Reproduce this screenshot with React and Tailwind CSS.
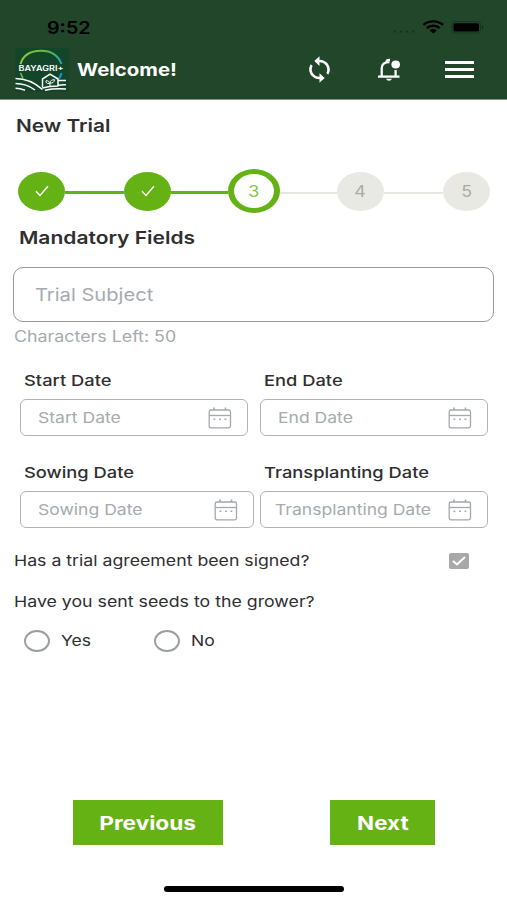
function Text({ className = "", children }) {
  return (
    <span className={`inline-block whitespace-nowrap leading-5 ${className}`}>
      {children}
    </span>
  );
}

function Logo() {
  return (
    <svg width="54" height="44" viewBox="0 0 54 44" fill="none">
      <defs>
        <linearGradient id="ring" x1="6" y1="20" x2="48" y2="22" gradientUnits="userSpaceOnUse">
          <stop offset="0" stopColor="#8fc83a" />
          <stop offset="0.6" stopColor="#63b544" />
          <stop offset="1" stopColor="#1fa3c4" />
        </linearGradient>
      </defs>
      <rect width="54" height="44" fill="#134629" />
      <path d="M5.500 16C8 7.500 15.500 2.700 26 2.700S43.500 8 46.500 16" stroke="url(#ring)" strokeWidth="2" />
      <path d="M5.500 25C6.500 27.500 7 28.500 8 30" stroke="#7cc142" strokeWidth="1.500" />
      <path d="M46.500 25C46 27.500 45.500 28.500 44 30.500" stroke="#1b8fd0" strokeWidth="2.200" />
      <text
        x="3.500"
        y="23"
        fill="#fff"
        fontFamily="Inter, sans-serif"
        fontSize="7"
        fontWeight="600"
        textLength="45"
        lengthAdjust="spacingAndGlyphs"
      >
        BAYAGRI+
      </text>
      <g stroke="#fff" strokeWidth="1.500">
        <path d="M0.500 30.500C10 30.500 19 34 27.500 41.500" />
        <path d="M0.500 35.500C8 35.500 14 37.500 20 42" />
        <path d="M0.500 40.200C4 40.200 7 41 10 42.300" />
        <path d="M43 37.200C46 36.700 48 36.700 51 36.800" />
        <path d="M30 42.200C37 40.700 43 40.500 51 41" />
        <path d="M43 32.500H51" />
        <path d="M27.500 39.500V31L35 26.200L43 31V38C37 38 32 38.600 27.500 40" strokeLinejoin="round" />
        <path d="M35 38V35M34.500 35.500C31.500 36 30.500 34 31 32.800C33 32.400 34.500 33.500 34.500 35.500ZM35 35C35 32.500 37 31.700 39.500 31.700C39.500 34 37.500 35.500 35 35Z" strokeWidth="1" />
      </g>
    </svg>
  );
}

function StatusIcons() {
  return (
    <svg width="94" height="20" viewBox="0 0 94 20" fill="none">
      <g fill="#17301f">
        <ellipse cx="4" cy="13.500" rx="1.300" ry="1" />
        <ellipse cx="10" cy="13.500" rx="1.300" ry="1" />
        <ellipse cx="16" cy="13.500" rx="1.300" ry="1" />
        <ellipse cx="22" cy="13.500" rx="1.300" ry="1" />
      </g>
      <g stroke="#000" strokeWidth="2.300">
        <path d="M32.500 6.800C38 2.300 46.500 2.300 52 6.800" />
        <path d="M35.800 10C39.500 7 45 7 48.700 10" />
      </g>
      <path d="M38.500 12.300C40.800 10.500 43.700 10.500 46 12.300L42.250 15.500Z" fill="#000" />
      <rect x="61" y="3.500" width="28.500" height="11.500" rx="3" stroke="#183321" />
      <rect x="62.500" y="5.200" width="25.500" height="8.300" rx="1.500" fill="#000" />
      <path d="M91 7.500V11C92.500 10.500 92.500 8 91 7.500Z" fill="#102418" />
    </svg>
  );
}

function SyncIcon() {
  return (
    <svg width="31" height="29" viewBox="0 0 24 24" preserveAspectRatio="none" fill="#fff">
      <path d="M12 4V1L8 5l4 4V6c3.310 0 6 2.690 6 6 0 1.010-.25 1.970-.7 2.800l1.460 1.460C19.540 15.030 20 13.570 20 12c0-4.420-3.580-8-8-8zm0 14c-3.310 0-6-2.690-6-6 0-1.010.25-1.970.7-2.800L5.240 7.740C4.460 8.970 4 10.430 4 12c0 4.420 3.580 8 8 8v3l4-4-4-4v3z" />
    </svg>
  );
}

function BellIcon() {
  return (
    <svg width="24" height="24" viewBox="0 0 24 24" fill="none" stroke="#fff" strokeWidth="2.300">
      <path d="M1 18.600H22.500" />
      <path d="M4.700 18V10.500C4.700 6.500 7.700 4.200 12.500 4.200" />
      <path d="M18.600 12V18" />
      <path d="M9.300 4.800C9.500 2 10.500 1.700 13 1.900" />
      <path d="M9.200 20.800H14.800C14.300 23.300 9.700 23.300 9.200 20.800Z" fill="#fff" stroke="none" />
      <ellipse cx="18.700" cy="6.500" rx="4.300" ry="3.900" fill="#fff" stroke="none" />
    </svg>
  );
}

function CalendarIcon() {
  return (
    <svg width="24" height="22" viewBox="0 0 24 22" fill="none" stroke="#a3a8ad" strokeWidth="1.300">
      <rect x="1.200" y="3" width="21.300" height="17.800" rx="1.800" />
      <path d="M1.200 8.500H22.500" />
      <path d="M6 0.500V3M17.500 0.500V3" strokeWidth="1.600" />
      <path d="M5.500 12.300H7.300M11 12.300H12.800M16.500 12.300H18.300" strokeWidth="1.500" />
    </svg>
  );
}

function Check() {
  return (
    <svg width="14" height="12" viewBox="0 0 14 12" fill="none" stroke="#fff" strokeWidth="1.400">
      <path d="M1 6.200L5 10.500L13 1.200" />
    </svg>
  );
}

function Step({ number, state }) {
  if (state === "current") {
    return (
      <div className="flex h-11 w-[52px] shrink-0 items-center justify-center rounded-[50%] border-x-[6px] border-y-[5px] border-[#65b215] bg-white pt-px">
        <Text className="scale-x-[1.15] text-[15.500px] text-[#65b215]/80">{number}</Text>
      </div>
    );
  }
  if (state === "done") {
    return (
      <div className="flex h-[39px] w-[47px] shrink-0 items-center justify-center rounded-[50%] bg-[#65b215]">
        <Check />
      </div>
    );
  }
  return (
    <div className="flex h-[39px] w-[47px] shrink-0 items-center justify-center rounded-[50%] bg-[#e9e9e4] pt-px">
      <Text className="scale-x-[1.15] text-[15.500px] text-[#a9a9a9]">{number}</Text>
    </div>
  );
}

function DateField({ label, className = "", inset = "pl-[17px]" }) {
  return (
    <div className={className}>
      <div className="flex h-5 items-center pl-1">
        <Text className="origin-left scale-x-[1.22] text-[15px] font-medium text-[#2f2f2f]">{label}</Text>
      </div>
      <div
        className={`mt-2 flex h-[37px] items-center justify-between rounded-md border-[1.500px] border-[#b0b4b7] pr-[15px] ${inset}`}
      >
        <Text className="origin-left scale-x-[1.17] text-[15px] text-[#a5abb0]">{label}</Text>
        <CalendarIcon />
      </div>
    </div>
  );
}

function Radio({ label, className }) {
  return (
    <div className={`flex items-center gap-[11px] ${className}`}>
      <span className="h-[22px] w-[26px] rounded-[50%] border-2 border-[#9b9fa1]" />
      <Text className="origin-left scale-x-[1.17] text-[15px] text-[#2f2f2f]">{label}</Text>
    </div>
  );
}

export default function App() {
  return (
    <div className="flex h-[900px] w-[507px] flex-col overflow-hidden bg-white font-['Inter',sans-serif]">
      <header className="h-[100px] shrink-0 border-b border-[#7f9484] bg-[#21462a]">
        <div className="flex h-[47px] items-center justify-between pt-2 pr-[22px] pl-[47px]">
          <Text className="origin-left scale-x-[1.16] text-[17px] font-semibold text-black">9:52</Text>
          <StatusIcons />
        </div>
        <div className="flex h-[46px] items-center pl-[15px]">
          <Logo />
          <div className="w-[230px] pl-2">
            <Text className="origin-left scale-x-[1.165] text-[17.500px] font-bold text-white">Welcome!</Text>
          </div>
          <div className="flex items-center pb-px pl-[5px]">
            <SyncIcon />
            <div className="ml-[42px]">
              <BellIcon />
            </div>
            <div className="ml-[44px] flex w-[29px] flex-col gap-1">
              <span className="h-[3px] bg-white" />
              <span className="h-[3px] bg-white" />
              <span className="h-[3px] bg-white" />
            </div>
          </div>
        </div>
      </header>

      <main className="flex flex-1 flex-col">
        <h1 className="mt-4 flex h-5 items-center pl-4">
          <Text className="origin-left scale-x-[1.19] text-[17.500px] font-semibold text-[#2f2f2f]">New Trial</Text>
        </h1>

        <div className="mt-[33px] flex h-11 items-center pr-[17px] pl-[18px]">
          <Step state="done" />
          <span className="mt-[3px] h-[3px] w-[59px] bg-[#65b215]" />
          <Step state="done" />
          <span className="mt-[3px] h-[3px] flex-1 bg-[#65b215]" />
          <Step number={3} state="current" />
          <span className="mt-[3px] h-[2px] flex-1 bg-[#e6e6e2]" />
          <Step number={4} />
          <span className="mt-[3px] h-[2px] w-[59px] bg-[#e6e6e2]" />
          <Step number={5} />
        </div>

        <h2 className="mt-[15px] flex h-5 items-center pl-[19px]">
          <Text className="origin-left scale-x-[1.2] text-[17.500px] font-semibold text-[#2f2f2f]">
            Mandatory Fields
          </Text>
        </h2>

        <div className="mx-[13px] mt-[19px] flex h-[55px] items-center rounded-[10px] border-[1.500px] border-[#999] pl-[21px]">
          <Text className="origin-left scale-x-[1.15] text-[17.500px] text-[#a5abb0]">Trial Subject</Text>
        </div>
        <div className="mt-[5px] flex h-5 items-center pl-[14px]">
          <Text className="origin-left scale-x-[1.15] text-[15.500px] text-[#a5abb0]">Characters Left: 50</Text>
        </div>

        <div className="mt-6 flex justify-between pr-[19px] pl-5">
          <DateField label="Start Date" className="w-[228px]" />
          <DateField label="End Date" className="w-[228px]" />
        </div>
        <div className="mt-[27px] flex justify-between pr-[19px] pl-5">
          <DateField label="Sowing Date" className="w-[234px]" />
          <DateField label="Transplanting Date" className="w-[228px]" inset="pl-[14px]" />
        </div>

        <div className="mt-[23px] flex h-5 items-center justify-between pr-[38px] pl-[14px]">
          <Text className="origin-left scale-x-[1.18] text-[15px] text-[#2f2f2f]">
            Has a trial agreement been signed?
          </Text>
          <span className="flex h-4 w-[20px] items-center justify-center rounded-xs bg-[#a8a8a8]">
            <svg width="14" height="10" viewBox="0 0 14 10" fill="none" stroke="#fff" strokeWidth="2">
              <path d="M1 5L5 8.500L13 1" />
            </svg>
          </span>
        </div>
        <div className="mt-[21px] flex h-5 items-center pl-[14px]">
          <Text className="origin-left scale-x-[1.183] text-[15px] text-[#2f2f2f]">
            Have you sent seeds to the grower?
          </Text>
        </div>

        <div className="mt-[18px] flex pl-6">
          <Radio label="Yes" className="w-[130px]" />
          <Radio label="No" className="w-[100px]" />
        </div>

        <div className="mt-auto flex pl-[73px]">
          <button className="flex h-[45px] w-[150px] items-center justify-center bg-[#65b215] pt-0.5">
            <Text className="scale-x-[1.19] text-[19px] font-bold text-white">Previous</Text>
          </button>
          <button className="ml-[107px] flex h-[45px] w-[105px] items-center justify-center bg-[#65b215] pt-0.5">
            <Text className="scale-x-[1.18] text-[19px] font-bold text-white">Next</Text>
          </button>
        </div>
        <div className="mt-[41px] mb-2 ml-[164px] h-[6px] w-[180px] rounded-full bg-black" />
      </main>
    </div>
  );
}
